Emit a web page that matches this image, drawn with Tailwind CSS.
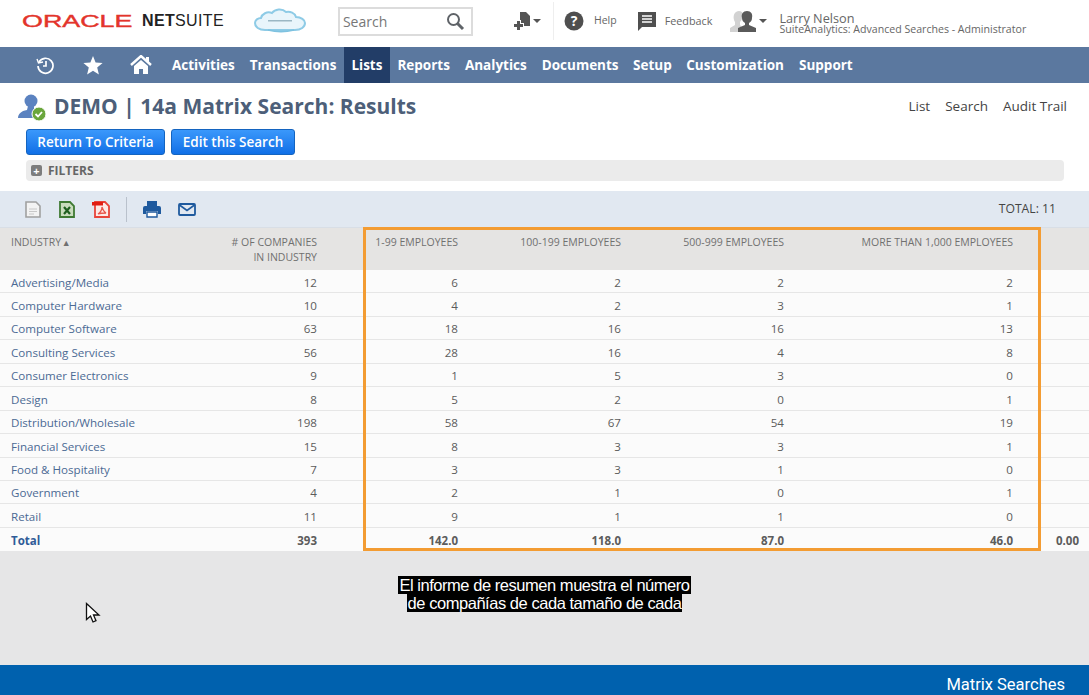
<!DOCTYPE html>
<html lang="es">
<head>
<meta charset="utf-8">
<title>Matrix Search Results</title>
<script src="https://cdn.jsdelivr.net/npm/@tailwindcss/browser@4"></script>
</head>
<body class="m-0 overflow-hidden">
<div class="relative w-[1089px] h-[695px] overflow-hidden flex flex-col bg-[#e6e6e7] font-['Open_Sans',sans-serif] text-[#555]">

  <!-- Top header -->
  <header class="h-[47px] bg-white flex items-center shrink-0 relative pb-[5px]">
    <div class="flex items-center ml-[22px] w-[111px] h-[20px]">
      <span class="font-['Liberation_Sans',sans-serif] text-[#e3342b] text-[17px] leading-none origin-left scale-x-[1.58] [-webkit-text-stroke:0.4px_#e3342b]">ORACLE</span>
    </div>
    <div class="ml-[9px] text-[16px] leading-none text-[#222] font-['Liberation_Sans',sans-serif] tracking-[0.35px]"><b>NET</b>SUITE</div>
    <svg class="ml-[30px]" width="52" height="26" viewBox="0 0 52 26" aria-hidden="true">
      <path d="M11 22c-6 0-10-3-10-7 0-3 3-5 6-5 1-4 6-7 11-5 3-4 10-5 14-1 4-1 9 1 10 5 5 0 9 3 9 6 0 4-4 7-10 7z" fill="#e9f5fb" stroke="#8ecbe6" stroke-width="2"/>
      <path d="M14 22c8 2 18 2 26 0" fill="none" stroke="#7ec2e0" stroke-width="1.5"/>
      <rect x="14" y="12" width="24" height="1.5" fill="#9bb7c4"/>
    </svg>
    <div class="ml-[32px] w-[135px] h-[29px] border-2 border-[#dcdcdc] flex items-center justify-between pl-[3px] pr-[6px]">
      <span class="text-[14px] text-[#777]">Search</span>
      <svg width="19" height="19" viewBox="0 0 19 19" fill="none" stroke="#5f6368" aria-hidden="true"><circle cx="7.5" cy="7.5" r="5.5" stroke-width="2"/><path d="M11.5 11.500l5.500 5.500" stroke-width="3"/></svg>
    </div>
    <div class="ml-[41px] flex items-center">
      <svg width="18" height="20" viewBox="0 0 18 20" fill="#555" aria-hidden="true"><path d="M6 1h6l4 4v10H10v-3H7V9H6z"/><path d="M3 10h3v3h3v3H6v3H3v-3H0v-3h3z"/></svg>
      <span class="ml-[1px] w-0 h-0 border-x-[4px] border-x-transparent border-t-[4px] border-t-[#555]"></span>
    </div>
    <div class="ml-[12px] w-px h-[38px] bg-[#eeeeee]"></div>
    <svg class="ml-[10px]" width="20" height="20" viewBox="0 0 20 20" aria-hidden="true"><circle cx="10" cy="10" r="9.5" fill="#4f4f4f"/><text x="10" y="15" text-anchor="middle" fill="#fff" font-size="14" font-weight="700" font-family="Open Sans">?</text></svg>
    <span class="ml-[10px] text-[10.5px] text-[#666]">Help</span>
    <svg class="ml-[20px]" width="20" height="21" viewBox="0 0 20 21" aria-hidden="true"><path d="M1 1h18v15H5l-4 4z" fill="#4f4f4f"/><path d="M5 5h10M5 8h10M5 11h10" stroke="#fff" stroke-width="1.4"/></svg>
    <span class="ml-[8px] text-[10.8px] text-[#666]">Feedback</span>
    <svg class="ml-[18px]" width="26" height="22" viewBox="0 0 26 22" aria-hidden="true"><path d="M6 2a5 5 0 0 1 6 0c2 3 0 8-2 10v3l4 4v3H0v-4l5-3v-3C3 9 3 4 6 2z" fill="#d2d2d2"/><path d="M17 1c-4 0-6 3-5 7 0 2 1 4 3 5v2l-7 3v4h18v-4l-7-3v-2c2-1 3-3 3-5 1-4-1-7-5-7z" fill="#5a5a5a"/></svg>
    <span class="ml-[3px] w-0 h-0 border-x-[4px] border-x-transparent border-t-[4px] border-t-[#555]"></span>
    <div class="ml-[12px] mt-[5px] flex flex-col text-[#666]">
      <span class="text-[12.7px] leading-[11px]">Larry Nelson</span>
      <span class="text-[10.6px] leading-[10px]">SuiteAnalytics: Advanced Searches - Administrator</span>
    </div>
  </header>

  <!-- Navigation -->
  <nav class="h-[36px] bg-[#5b789f] flex items-center shrink-0 text-white text-[13.5px] font-bold">
    <svg class="ml-[36px]" width="19" height="19" viewBox="0 0 19 19" fill="none" stroke="#fff" stroke-width="1.7" aria-hidden="true"><path d="M3 6a7.500 7.500 0 1 1-1 4"/><path d="M1 3l1.500 4L7 6" stroke-width="1.4"/><path d="M10 5v5H7"/></svg>
    <svg class="ml-[28px]" width="20" height="19" viewBox="0 0 20 19" fill="#fff" aria-hidden="true"><path d="M10 0l2.600 6.600 7 .5-5.400 4.500 1.700 6.900L10 14.800l-5.900 3.700 1.700-6.900L.4 7.100l7-.5z"/></svg>
    <svg class="ml-[27px]" width="22" height="20" viewBox="0 0 22 20" aria-hidden="true"><path d="M1 10L11 1l10 9" fill="none" stroke="#fff" stroke-width="2.4"/><path d="M16 2h3v5h-3z" fill="#fff"/><path d="M4 11l7-6 7 6v8h-5v-5H9v5H4z" fill="#fff"/></svg>
    <div class="ml-[12.5px] flex h-full">
      <a class="flex items-center px-[7.5px]">Activities</a>
      <a class="flex items-center px-[7.5px]">Transactions</a>
      <a class="flex items-center px-[7.5px] bg-[#223d67]">Lists</a>
      <a class="flex items-center px-[7.5px]">Reports</a>
      <a class="flex items-center px-[7.5px]">Analytics</a>
      <a class="flex items-center px-[7.5px]">Documents</a>
      <a class="flex items-center px-[7px]">Setup</a>
      <a class="flex items-center px-[7.5px]">Customization</a>
      <a class="flex items-center px-[7.5px]">Support</a>
    </div>
  </nav>

  <!-- Title area -->
  <section class="h-[108px] bg-white shrink-0 flex flex-col">
    <div class="flex items-center h-[46px] pl-[18px] pr-[22px]">
      <svg width="28" height="28" viewBox="0 0 28 28" class="mt-[1px]" aria-hidden="true"><circle cx="13" cy="8" r="6.500" fill="#5b82c0"/><path d="M10 13h6v3l5 2v7H0c0-4 3-7 9-8z" fill="#5b82c0"/><circle cx="21" cy="21" r="7" fill="#6aa63c" stroke="#fff" stroke-width="1"/><path d="M17.500 21l2.500 2.500 4-4.500" fill="none" stroke="#fff" stroke-width="1.8"/></svg>
      <h1 class="ml-[8px] text-[21px] font-bold text-[#4d5f79] leading-none">DEMO | 14a Matrix Search: Results</h1>
      <div class="ml-auto flex gap-[15px] text-[13.5px] text-[#444]"><span>List</span><span>Search</span><span>Audit Trail</span></div>
    </div>
    <div class="flex gap-[6px] pl-[26px]">
      <button class="h-[26px] w-[139px] rounded-[3px] bg-linear-to-b from-[#3a98fb] to-[#0f6fe6] border border-[#1464c0] text-white text-[13.5px] font-semibold">Return To Criteria</button>
      <button class="h-[26px] w-[124px] rounded-[3px] bg-linear-to-b from-[#3a98fb] to-[#0f6fe6] border border-[#1464c0] text-white text-[13.5px] font-semibold">Edit this Search</button>
    </div>
    <div class="mt-[5px] ml-[26px] mr-[25px] h-[21px] rounded-[4px] bg-[#ebebeb] flex items-center pl-[5px]">
      <span class="w-[11px] h-[11px] rounded-[2px] bg-[#7d7d7d] flex items-center justify-center text-white text-[11px] font-bold leading-none">+</span>
      <span class="ml-[6px] text-[12px] font-bold text-[#666]">FILTERS</span>
    </div>
  </section>

  <!-- Toolbar -->
  <div class="h-[37px] bg-[#e1e8f1] shrink-0 flex items-center pl-[25px] pr-[33px] border-b border-[#d8dee6]">
    <svg width="16" height="17" viewBox="0 0 16 17" aria-hidden="true"><path d="M1 1h10l4 4v11H1z" fill="#f3f3f3" stroke="#a0a0a0" stroke-width="1.6"/><path d="M4 8h8M4 10.500h8M4 13h5" stroke="#c8c8c8"/></svg>
    <svg class="ml-[18px]" width="16" height="17" viewBox="0 0 16 17" aria-hidden="true"><path d="M1 1h10l4 4v11H1z" fill="#c9dcbd" stroke="#3f7a33" stroke-width="1.8"/><path d="M5 6l6 7M11 6l-6 7" stroke="#1f5f1f" stroke-width="2.2"/></svg>
    <svg class="ml-[17px]" width="18" height="18" viewBox="0 0 18 18" aria-hidden="true"><path d="M3 2h10l4 4v11H3z" fill="#fde9e6" stroke="#e8443a" stroke-width="1.8"/><rect x="0" y="2" width="11" height="3.500" fill="#e11d12"/><path d="M6 14c3-2 4-5 4-7 1 3 2 5 4 6-3 0-5 0-8 1z" fill="none" stroke="#e8554a" stroke-width="1.3"/></svg>
    <div class="ml-[16px] w-px h-[25px] bg-[#b9c1cc]"></div>
    <svg class="ml-[16px]" width="18" height="18" viewBox="0 0 18 18" aria-hidden="true"><path d="M4 1h10v5H4z" fill="#1f5a9e"/><path d="M2 6h14a2 2 0 0 1 2 2v6h-3v-3H3v3H0V8a2 2 0 0 1 2-2z" fill="#1f5a9e"/><path d="M4 12h10v5H4z" fill="#fff" stroke="#1f5a9e" stroke-width="1.4"/></svg>
    <svg class="ml-[17px]" width="18" height="13" viewBox="0 0 18 13" fill="none" stroke="#1f5a9e" aria-hidden="true"><rect x="1" y="1" width="16" height="11" rx="1" stroke-width="1.8"/><path d="M1.500 2l7.500 5.500L16.500 2" stroke-width="1.600"/></svg>
    <span class="ml-auto text-[12.2px] text-[#444]">TOTAL: 11</span>
  </div>

  <!-- Table -->
  <div class="relative shrink-0 text-[11.6px] text-[#5c5c5c]">
    <div class="grid grid-cols-[200px_127px_141px_163px_163px_229px_66px] h-[42px] bg-[#e5e4e3] text-[10.5px] text-[#707070] leading-[15px] pt-[7px] *:pr-[10px] *:text-right">
      <div class="!text-left pl-[11px]">INDUSTRY <span class="text-[9px] -ml-[2px]">▲</span></div>
      <div class="whitespace-nowrap"># OF COMPANIES<br>IN INDUSTRY</div>
      <div class="whitespace-nowrap">1-99 EMPLOYEES</div>
      <div class="whitespace-nowrap">100-199 EMPLOYEES</div>
      <div class="whitespace-nowrap">500-999 EMPLOYEES</div>
      <div class="whitespace-nowrap">MORE THAN 1,000 EMPLOYEES</div>
      <div></div>
    </div>
    <div class="bg-[#fbfbfb] divide-y divide-[#e6e6e6]">
      <div class="grid grid-cols-[200px_127px_141px_163px_163px_229px_66px] h-[23.45px] items-center *:pt-[2px] *:pr-[10px] *:text-right"><a class="!text-left pl-[11px] text-[#4b6a94]">Advertising/Media</a><div>12</div><div>6</div><div>2</div><div>2</div><div>2</div><div></div></div>
      <div class="grid grid-cols-[200px_127px_141px_163px_163px_229px_66px] h-[23.45px] items-center *:pt-[2px] *:pr-[10px] *:text-right"><a class="!text-left pl-[11px] text-[#4b6a94]">Computer Hardware</a><div>10</div><div>4</div><div>2</div><div>3</div><div>1</div><div></div></div>
      <div class="grid grid-cols-[200px_127px_141px_163px_163px_229px_66px] h-[23.45px] items-center *:pt-[2px] *:pr-[10px] *:text-right"><a class="!text-left pl-[11px] text-[#4b6a94]">Computer Software</a><div>63</div><div>18</div><div>16</div><div>16</div><div>13</div><div></div></div>
      <div class="grid grid-cols-[200px_127px_141px_163px_163px_229px_66px] h-[23.45px] items-center *:pt-[2px] *:pr-[10px] *:text-right"><a class="!text-left pl-[11px] text-[#4b6a94]">Consulting Services</a><div>56</div><div>28</div><div>16</div><div>4</div><div>8</div><div></div></div>
      <div class="grid grid-cols-[200px_127px_141px_163px_163px_229px_66px] h-[23.45px] items-center *:pt-[2px] *:pr-[10px] *:text-right"><a class="!text-left pl-[11px] text-[#4b6a94]">Consumer Electronics</a><div>9</div><div>1</div><div>5</div><div>3</div><div>0</div><div></div></div>
      <div class="grid grid-cols-[200px_127px_141px_163px_163px_229px_66px] h-[23.45px] items-center *:pt-[2px] *:pr-[10px] *:text-right"><a class="!text-left pl-[11px] text-[#4b6a94]">Design</a><div>8</div><div>5</div><div>2</div><div>0</div><div>1</div><div></div></div>
      <div class="grid grid-cols-[200px_127px_141px_163px_163px_229px_66px] h-[23.45px] items-center *:pt-[2px] *:pr-[10px] *:text-right"><a class="!text-left pl-[11px] text-[#4b6a94]">Distribution/Wholesale</a><div>198</div><div>58</div><div>67</div><div>54</div><div>19</div><div></div></div>
      <div class="grid grid-cols-[200px_127px_141px_163px_163px_229px_66px] h-[23.45px] items-center *:pt-[2px] *:pr-[10px] *:text-right"><a class="!text-left pl-[11px] text-[#4b6a94]">Financial Services</a><div>15</div><div>8</div><div>3</div><div>3</div><div>1</div><div></div></div>
      <div class="grid grid-cols-[200px_127px_141px_163px_163px_229px_66px] h-[23.45px] items-center *:pt-[2px] *:pr-[10px] *:text-right"><a class="!text-left pl-[11px] text-[#4b6a94]">Food &amp; Hospitality</a><div>7</div><div>3</div><div>3</div><div>1</div><div>0</div><div></div></div>
      <div class="grid grid-cols-[200px_127px_141px_163px_163px_229px_66px] h-[23.45px] items-center *:pt-[2px] *:pr-[10px] *:text-right"><a class="!text-left pl-[11px] text-[#4b6a94]">Government</a><div>4</div><div>2</div><div>1</div><div>0</div><div>1</div><div></div></div>
      <div class="grid grid-cols-[200px_127px_141px_163px_163px_229px_66px] h-[23.45px] items-center *:pt-[2px] *:pr-[10px] *:text-right"><a class="!text-left pl-[11px] text-[#4b6a94]">Retail</a><div>11</div><div>9</div><div>1</div><div>1</div><div>0</div><div></div></div>
      <div class="grid grid-cols-[200px_127px_141px_163px_163px_229px_66px] h-[23.45px] items-center font-bold text-[11.5px] *:pt-[2px] *:pr-[10px] *:text-right"><a class="!text-left pl-[11px] text-[#2f5c98]">Total</a><div>393</div><div>142.0</div><div>118.0</div><div>87.0</div><div>46.0</div><div>0.00</div></div>
    </div>
    <div class="absolute left-[363px] top-[-1px] w-[678px] h-[324px] border-[3px] border-[#f39c33] pointer-events-none"></div>
  </div>

  <!-- Caption -->
  <div class="flex-1 relative">
    <div class="absolute left-0 right-0 top-[25px] text-center font-['Liberation_Sans',sans-serif] text-[16.5px] leading-[18px] tracking-[-0.46px] text-white">
      <span class="bg-black px-px">El informe de resumen muestra el número</span><br>
      <span class="bg-black px-px">de compañías de cada tamaño de cada</span>
    </div>
    <svg class="absolute left-[85px] top-[51px]" width="16" height="22" viewBox="0 0 16 22" aria-hidden="true"><path d="M1.500 1.500v16l4-3.500 2.500 6 3-1.300-2.500-5.700h5.500z" fill="#fff" stroke="#111" stroke-width="1.300"/></svg>
  </div>

  <!-- Footer -->
  <footer class="h-[30px] bg-[#0061ae] shrink-0 flex items-end justify-end pr-[24px] text-white font-['Roboto',sans-serif] text-[16.5px] leading-[20px]">Matrix Searches</footer>
</div>
</body>
</html>
